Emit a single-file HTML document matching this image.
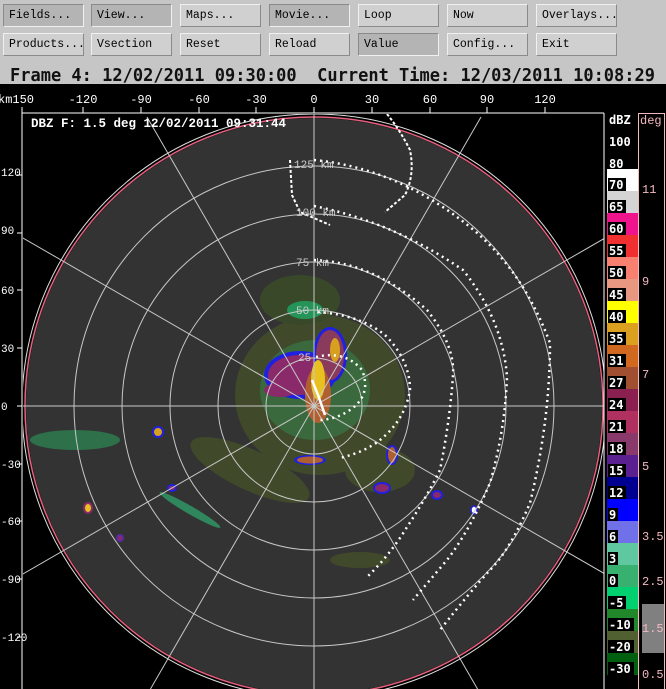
<!DOCTYPE html>
<html><head><style>
html,body{margin:0;padding:0;}
body{width:666px;height:689px;background:#000;position:relative;overflow:hidden;font-family:"Liberation Sans",sans-serif;}
#top{position:absolute;left:0;top:0;width:666px;height:84px;background:#c6c6c6;}
.b{position:absolute;width:74px;height:21px;background:#d0d0d0;border:1px solid #f0f0f0;border-right-color:#8a8a8a;border-bottom-color:#8a8a8a;font-family:"Liberation Mono",monospace;font-size:11.5px;line-height:21px;padding-left:5px;box-sizing:content-box;color:#000;}
.p{background:#b4b4b4;border-color:#8a8a8a #f0f0f0 #f0f0f0 #8a8a8a;}
svg{position:absolute;left:0;top:0;}
</style></head><body>
<div id="top"></div>
<div class="b p" style="left:3px;top:4px">Fields...</div>
<div class="b p" style="left:91px;top:4px">View...</div>
<div class="b" style="left:180px;top:4px">Maps...</div>
<div class="b p" style="left:269px;top:4px">Movie...</div>
<div class="b" style="left:358px;top:4px">Loop</div>
<div class="b" style="left:447px;top:4px">Now</div>
<div class="b" style="left:536px;top:4px">Overlays...</div>
<div class="b" style="left:3px;top:33px">Products...</div>
<div class="b" style="left:91px;top:33px">Vsection</div>
<div class="b" style="left:180px;top:33px">Reset</div>
<div class="b" style="left:269px;top:33px">Reload</div>
<div class="b p" style="left:358px;top:33px">Value</div>
<div class="b" style="left:447px;top:33px">Config...</div>
<div class="b" style="left:536px;top:33px">Exit</div>

<svg width="666" height="689" viewBox="0 0 666 689" font-family="Liberation Mono, monospace">
<defs><clipPath id="pc"><rect x="23" y="114" width="581" height="580"/></clipPath></defs>
<text x="10" y="81" textLength="645" lengthAdjust="spacingAndGlyphs" font-family="DejaVu Sans Mono, monospace" font-weight="bold" font-size="18" fill="#111" xml:space="preserve">Frame 4: 12/02/2011 09:30:00  Current Time: 12/03/2011 10:08:29</text>
<rect x="0" y="84" width="666" height="605" fill="#000"/>
<g clip-path="url(#pc)">
 <circle cx="314" cy="406" r="289" fill="none" stroke="#e86080" stroke-width="1.5"/>
 <circle cx="314" cy="406" r="288" fill="#333"/>
 <circle cx="314" cy="406" r="292" fill="none" stroke="#ddd" stroke-width="1"/>
 <g opacity="0.55">
 <ellipse cx="320" cy="395" rx="85" ry="80" fill="#4b5d25"/>
 <ellipse cx="300" cy="300" rx="40" ry="25" fill="#3f5a22"/>
 <ellipse cx="250" cy="470" rx="65" ry="20" fill="#4b5d25" transform="rotate(25 250 470)"/>
 <ellipse cx="380" cy="470" rx="35" ry="22" fill="#4b5d25"/>
 <ellipse cx="360" cy="560" rx="30" ry="8" fill="#4b5d25"/>
 </g>
 <ellipse cx="75" cy="440" rx="45" ry="10" fill="#2a9a5a" opacity="0.6"/>
 <ellipse cx="190" cy="510" rx="35" ry="4" fill="#2fbf7a" opacity="0.6" transform="rotate(30 190 510)"/>
 <ellipse cx="315" cy="390" rx="55" ry="50" fill="#2fa45e" opacity="0.35"/>
 <ellipse cx="305" cy="310" rx="18" ry="9" fill="#18c878" opacity="0.6"/>
 <ellipse cx="300" cy="375" rx="36" ry="24" fill="#2020e0"/>
 <ellipse cx="300" cy="375" rx="32" ry="20" fill="#8a2a6a"/>
 <ellipse cx="330" cy="355" rx="17" ry="28" fill="#2020e0"/>
 <ellipse cx="330" cy="355" rx="14" ry="25" fill="#8a3a5a"/>
 <ellipse cx="318" cy="395" rx="13" ry="28" fill="#b06030"/>
 <ellipse cx="318" cy="380" rx="7" ry="20" fill="#e8c020"/>
 <ellipse cx="335" cy="350" rx="5" ry="12" fill="#d8a020"/>
 <ellipse cx="280" cy="390" rx="16" ry="7" fill="#8a2a6a"/>
 <ellipse cx="310" cy="460" rx="16" ry="5" fill="#2020e0"/>
 <ellipse cx="310" cy="460" rx="13" ry="3.5" fill="#b06030"/>
 <ellipse cx="158" cy="432" rx="5" ry="5" fill="#d8a020" stroke="#2020e0" stroke-width="2"/>
 <ellipse cx="88" cy="508" rx="4" ry="5" fill="#e8c020" stroke="#8a2a6a" stroke-width="2"/>
 <ellipse cx="120" cy="538" rx="3" ry="3" fill="#8a2a6a" stroke="#5a2aa0" stroke-width="2"/>
 <ellipse cx="172" cy="488" rx="4" ry="3" fill="#8a2a6a" stroke="#2020e0" stroke-width="2"/>
 <ellipse cx="392" cy="455" rx="5" ry="9" fill="#b06030" stroke="#2020e0" stroke-width="2"/>
 <ellipse cx="382" cy="488" rx="8" ry="5" fill="#8a2a6a" stroke="#2020e0" stroke-width="2"/>
 <ellipse cx="437" cy="495" rx="5" ry="4" fill="#8a2a6a" stroke="#2020e0" stroke-width="2"/>
 <ellipse cx="474" cy="510" rx="3" ry="4" fill="#fff" stroke="#2020e0" stroke-width="1.5"/>
 <g fill="none" stroke="#c8c8c8" stroke-width="1">
  <circle cx="314" cy="406" r="48"/><circle cx="314" cy="406" r="96"/><circle cx="314" cy="406" r="144"/>
  <circle cx="314" cy="406" r="192"/><circle cx="314" cy="406" r="240"/>
  <line x1="0" y1="406" x2="666" y2="406"/><line x1="314" y1="80" x2="314" y2="700"/>
  <line x1="147" y1="117" x2="481" y2="695"/><line x1="481" y1="117" x2="147" y2="695"/>
  <line x1="-10" y1="219" x2="638" y2="593"/><line x1="-10" y1="593" x2="638" y2="219"/>
 </g>
 <g fill="none" stroke="#fff" stroke-width="2.5" stroke-dasharray="2 4">
  <path d="M316 357 Q345 350 362 370 Q372 395 350 410 Q335 420 318 420"/>
  <path d="M318 312 Q360 315 385 335 Q410 360 410 390 Q405 420 380 440 Q365 452 340 458"/>
  <path d="M314 260 Q373 262 427 310 Q455 345 453 375 Q450 420 440 470 Q425 500 407 527 Q390 555 367 577"/>
  <path d="M314 206 Q393 222 463 270 Q503 320 507 377 Q505 430 490 483 Q470 530 447 560 Q430 580 413 600"/>
  <path d="M314 160 Q397 168 470 227 Q523 270 550 343 Q550 420 530 503 Q510 550 490 570 Q470 592 440 630"/>
 </g>
 <g fill="none" stroke="#fff" stroke-width="2" stroke-dasharray="3 2">
  <path d="M387 114 Q400 130 410 150 Q415 175 405 195 L385 212"/>
  <path d="M290 160 L292 195 L300 212 L330 225"/>
 </g>
 <path d="M312 380 L318 395 L325 415" fill="none" stroke="#fff" stroke-width="2.5"/>
 <g font-family="Liberation Mono, monospace" font-size="11" fill="#ccc">
  <text x="294" y="168">125 km</text><text x="296" y="216">100 km</text>
  <text x="296" y="266">75 km</text><text x="296" y="314">50 km</text><text x="298" y="361">25</text>
 </g>
</g>
<g stroke="#fff" stroke-width="1" fill="none">
 <line x1="22" y1="113" x2="604" y2="113"/><line x1="22" y1="113" x2="22" y2="689"/>
 <line x1="604" y1="113" x2="604" y2="689"/>
 <line x1="22" y1="107" x2="22" y2="113"/><line x1="83" y1="107" x2="83" y2="113"/><line x1="141" y1="107" x2="141" y2="113"/><line x1="199" y1="107" x2="199" y2="113"/><line x1="256" y1="107" x2="256" y2="113"/><line x1="314" y1="107" x2="314" y2="113"/><line x1="372" y1="107" x2="372" y2="113"/><line x1="430" y1="107" x2="430" y2="113"/><line x1="487" y1="107" x2="487" y2="113"/><line x1="545" y1="107" x2="545" y2="113"/>
 <line x1="17" y1="175" x2="22" y2="175"/><line x1="17" y1="233" x2="22" y2="233"/><line x1="17" y1="290" x2="22" y2="290"/><line x1="17" y1="348" x2="22" y2="348"/><line x1="17" y1="406" x2="22" y2="406"/><line x1="17" y1="464" x2="22" y2="464"/><line x1="17" y1="521" x2="22" y2="521"/><line x1="17" y1="579" x2="22" y2="579"/><line x1="17" y1="637" x2="22" y2="637"/>
</g>
<g fill="#fff" font-size="12" text-anchor="middle">
 <text x="16" y="103">km150</text><text x="83" y="103">-120</text><text x="141" y="103">-90</text><text x="199" y="103">-60</text><text x="256" y="103">-30</text><text x="314" y="103">0</text><text x="372" y="103">30</text><text x="430" y="103">60</text><text x="487" y="103">90</text><text x="545" y="103">120</text>
</g>
<g fill="#fff" font-size="11">
 <text x="1" y="176">120</text><text x="1" y="234">90</text><text x="1" y="294">60</text><text x="1" y="352">30</text><text x="1" y="410">0</text><text x="1" y="468">-30</text><text x="1" y="525">-60</text><text x="1" y="583">-90</text><text x="1" y="641">-120</text>
</g>
<text x="31" y="127" fill="#fff" font-size="12.5" font-weight="bold">DBZ F: 1.5 deg 12/02/2011 09:31:44</text>
<g>
 <rect x="607" y="169" width="31" height="22" fill="#fff"/>
 <rect x="607" y="191" width="31" height="22" fill="#d4d4d4"/>
 <rect x="607" y="213" width="31" height="22" fill="#f0148c"/>
 <rect x="607" y="235" width="31" height="22" fill="#f03030"/>
 <rect x="607" y="257" width="31" height="22" fill="#f88070"/>
 <rect x="607" y="279" width="31" height="22" fill="#e89880"/>
 <rect x="607" y="301" width="31" height="22" fill="#ffff00"/>
 <rect x="607" y="323" width="31" height="22" fill="#dca020"/>
 <rect x="607" y="345" width="31" height="22" fill="#d06820"/>
 <rect x="607" y="367" width="31" height="22" fill="#a05030"/>
 <rect x="607" y="389" width="31" height="22" fill="#8a2050"/>
 <rect x="607" y="411" width="31" height="22" fill="#b03060"/>
 <rect x="607" y="433" width="31" height="22" fill="#8a3a6a"/>
 <rect x="607" y="455" width="31" height="22" fill="#5a2090"/>
 <rect x="607" y="477" width="31" height="22" fill="#000090"/>
 <rect x="607" y="499" width="31" height="22" fill="#0000ff"/>
 <rect x="607" y="521" width="31" height="22" fill="#7070e8"/>
 <rect x="607" y="543" width="31" height="22" fill="#60c8a0"/>
 <rect x="607" y="565" width="31" height="22" fill="#38b070"/>
 <rect x="607" y="587" width="31" height="22" fill="#00d070"/>
 <rect x="607" y="609" width="31" height="22" fill="#20882a"/>
 <rect x="607" y="631" width="31" height="22" fill="#506030"/>
 <rect x="607" y="653" width="31" height="22" fill="#006010"/>
 <rect x="642" y="604" width="22" height="49" fill="#808080"/>
 <rect x="638.5" y="113.5" width="26" height="580" fill="none" stroke="#f4b8c0"/>
</g>
<g font-family="DejaVu Sans Mono, monospace" font-weight="bold" font-size="12" fill="#fff">
 <text x="609" y="124">dBZ</text><text x="609" y="146">100</text><text x="609" y="168">80</text>
</g>
<g font-family="DejaVu Sans Mono, monospace" font-weight="bold" font-size="12">
 <g fill="#000"><rect x="608" y="178" width="18" height="13"/><rect x="608" y="200" width="18" height="13"/><rect x="608" y="222" width="18" height="13"/><rect x="608" y="244" width="18" height="13"/><rect x="608" y="266" width="18" height="13"/><rect x="608" y="288" width="18" height="13"/><rect x="608" y="310" width="18" height="13"/><rect x="608" y="332" width="18" height="13"/><rect x="608" y="354" width="18" height="13"/><rect x="608" y="376" width="18" height="13"/><rect x="608" y="398" width="18" height="13"/><rect x="608" y="420" width="18" height="13"/><rect x="608" y="442" width="18" height="13"/><rect x="608" y="464" width="18" height="13"/><rect x="608" y="486" width="18" height="13"/><rect x="608" y="508" width="10" height="13"/><rect x="608" y="530" width="10" height="13"/><rect x="608" y="552" width="10" height="13"/><rect x="608" y="574" width="10" height="13"/><rect x="608" y="596" width="18" height="13"/><rect x="608" y="618" width="26" height="13"/><rect x="608" y="640" width="26" height="13"/><rect x="608" y="662" width="26" height="13"/></g>
 <g fill="#fff"><text x="609" y="189">70</text><text x="609" y="211">65</text><text x="609" y="233">60</text><text x="609" y="255">55</text><text x="609" y="277">50</text><text x="609" y="299">45</text><text x="609" y="321">40</text><text x="609" y="343">35</text><text x="609" y="365">31</text><text x="609" y="387">27</text><text x="609" y="409">24</text><text x="609" y="431">21</text><text x="609" y="453">18</text><text x="609" y="475">15</text><text x="609" y="497">12</text><text x="609" y="519">9</text><text x="609" y="541">6</text><text x="609" y="563">3</text><text x="609" y="585">0</text><text x="609" y="607">-5</text><text x="609" y="629">-10</text><text x="609" y="651">-20</text><text x="609" y="673">-30</text></g>
</g>
<g font-family="Liberation Mono, monospace" font-size="12" fill="#f4b8c0">
 <text x="640" y="124">deg</text>
 <text x="642" y="193">11</text><text x="642" y="285">9</text><text x="642" y="378">7</text><text x="642" y="470">5</text><text x="642" y="540">3.5</text><text x="642" y="585">2.5</text><text x="642" y="632">1.5</text><text x="642" y="678">0.5</text>
</g>
</svg>
</body></html>
